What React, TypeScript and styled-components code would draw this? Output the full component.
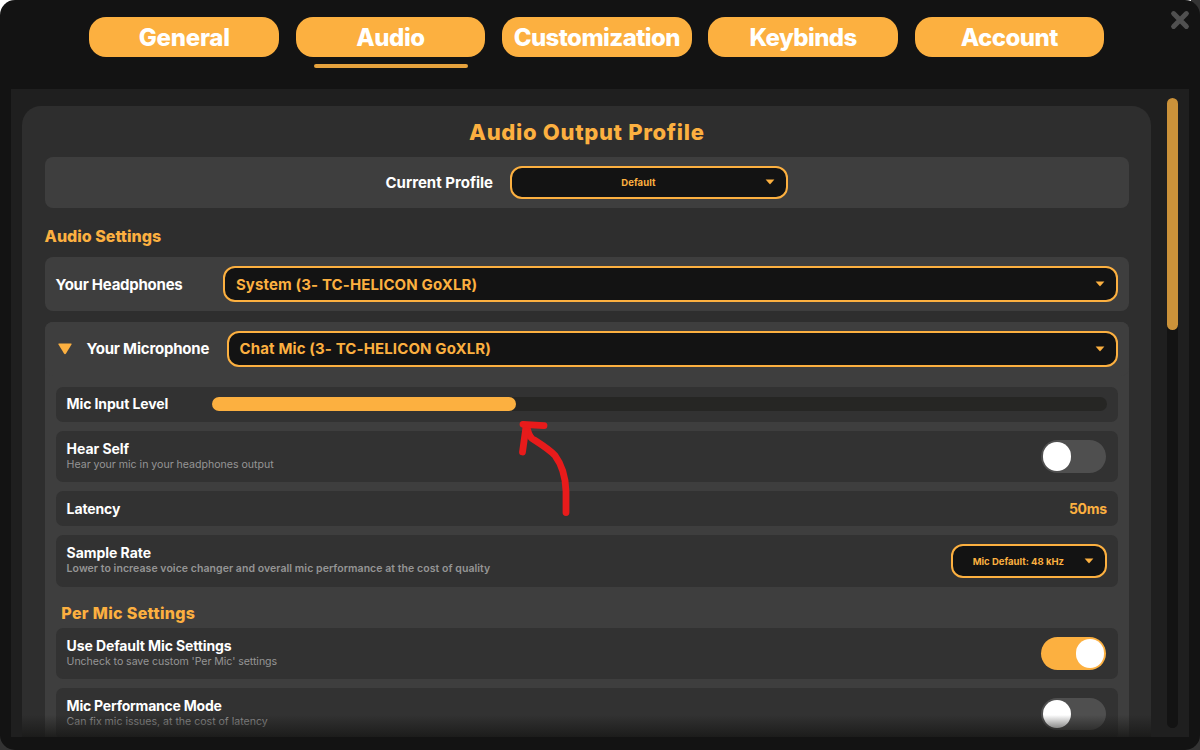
import React from 'react';
import styled, { createGlobalStyle } from 'styled-components';

const ORANGE = '#fcb040';

const GlobalStyle = createGlobalStyle`
  *, *::before, *::after { box-sizing: border-box; }
  body {
    margin: 0;
    background: linear-gradient(#fff, #fff) 0 0 / 20px 20px no-repeat,
      linear-gradient(#fff, #fff) 1183px 0 / 8px 2px no-repeat, #333;
    font-family: Inter, 'Liberation Sans', sans-serif;
    color: #fff;
  }
`;

const Window = styled.div`
  position: relative;
  width: 1200px;
  height: 750px;
  display: flex;
  flex-direction: column;
  padding: 17px 11px 13px;
  background: #131313;
  border-radius: 15px;
  overflow: hidden;
`;

const CloseButton = styled.button`
  position: absolute;
  top: 10px;
  right: 10px;
  width: 20px;
  height: 20px;
  padding: 0;
  border: 0;
  background: none;
  svg { display: block; }
`;

const Tabs = styled.nav`
  display: flex;
  align-items: flex-start;
  gap: 16.6px;
  height: 72px;
  padding-left: 78.4px;
`;

const TabItem = styled.div`
  display: flex;
  flex-direction: column;
  align-items: center;
  gap: 7px;
`;

const Tab = styled.button<{ $tracking: number }>`
  width: 189.7px;
  height: 40px;
  padding: 0;
  border: 0;
  border-radius: 17px;
  background: ${ORANGE};
  color: #fff;
  font: 800 24px/42px Inter, sans-serif;
  letter-spacing: ${p => p.$tracking}px;
  white-space: nowrap;
`;

const ActiveLine = styled.div`
  width: 154px;
  height: 4px;
  border-radius: 2px;
  background: #e6a23d;
`;

const Content = styled.main`
  position: relative;
  flex: none;
  width: 1178px;
  height: 648px;
  display: flex;
  align-items: flex-start;
  gap: 15.3px;
  padding: 17.3px 10.5px 0 11.3px;
  background: #1f1f1f;
  overflow: hidden;
`;

const Card = styled.section`
  flex: none;
  width: 1129px;
  height: 660px;
  padding: 0 22.3px;
  border-radius: 19px;
  background: #2e2e2e;
`;

const Fade = styled.div`
  position: absolute;
  left: 11.3px;
  bottom: 0;
  width: 1129px;
  height: 22px;
  background: linear-gradient(rgba(24, 24, 23, 0), rgba(24, 24, 23, 0.85));
`;

const ScrollTrack = styled.div`
  width: 11.5px;
  height: 630px;
  margin-top: -8.3px;
  border-radius: 6px;
  background: #131313;
`;

const ScrollThumb = styled.div`
  height: 232px;
  border-radius: 6px;
  background: #cb923a;
`;

const Title = styled.h1`
  height: 50.5px;
  margin: 0;
  color: ${ORANGE};
  text-align: center;
  font-size: 22px;
  font-weight: 800;
  line-height: 52px;
  letter-spacing: 0.69px;
`;

const Heading = styled.h2<{ $nested?: boolean }>`
  height: ${p => (p.$nested ? 41.5 : 49.7)}px;
  margin: 0;
  padding-left: ${p => (p.$nested ? 5.7 : 0)}px;
  padding-top: ${p => (p.$nested ? 3 : 5)}px;
  color: ${ORANGE};
  font-size: 16px;
  font-weight: 800;
  line-height: 47px;
  letter-spacing: ${p => (p.$nested ? 0.34 : 0)}px;
`;

const ProfileRow = styled.div`
  display: flex;
  align-items: center;
  justify-content: center;
  gap: 16.5px;
  height: 51px;
  border-radius: 8px;
  background: #3e3e3e;
`;

const DeviceRow = styled.div`
  display: flex;
  align-items: center;
  height: 53.5px;
  padding: 0 11.3px 0 11px;
  border-radius: 8px;
  background: #3e3e3e;
`;

const MicCard = styled.div`
  height: 440px;
  margin-top: 11.2px;
  border-radius: 8px;
  background: #3e3e3e;
`;

const MicBody = styled.div`
  padding: 11px 11.3px 0 11px;
`;

const Settings = styled.div`
  display: flex;
  flex-direction: column;
  gap: 9.2px;
`;

const Label = styled.span<{ $width?: number; $tracking?: number; $small?: boolean }>`
  flex: none;
  width: ${p => (p.$width ? `${p.$width}px` : 'auto')};
  padding-top: ${p => (p.$small ? 0 : 1)}px;
  font-size: ${p => (p.$small ? 14 : 15)}px;
  font-weight: 700;
  line-height: 18px;
  letter-spacing: ${p => p.$tracking ?? 0}px;
  white-space: nowrap;
`;

const Toggler = styled.span`
  flex: none;
  width: 31px;
  padding-left: 2px;
  svg { display: block; }
`;

const Select = styled.div<{ $compact?: boolean; $width?: number; $tracking?: number }>`
  display: flex;
  align-items: center;
  flex: ${p => (p.$width ? 'none' : '1')};
  width: ${p => (p.$width ? `${p.$width}px` : 'auto')};
  height: ${p => (p.$compact ? 33.5 : 36)}px;
  padding: 0 ${p => (p.$compact ? 10.8 : 11)}px 0 ${p => (p.$compact ? 0 : 11)}px;
  border: 2px solid ${ORANGE};
  border-radius: 12px;
  background: #131313;
  color: ${ORANGE};
  font-size: ${p => (p.$compact ? 9.5 : 15)}px;
  font-weight: 700;
  letter-spacing: ${p => p.$tracking ?? 0}px;
  white-space: nowrap;
  svg { flex: none; display: block; }
`;

const SelectText = styled.span<{ $center?: boolean }>`
  flex: 1;
  text-align: ${p => (p.$center ? 'center' : 'left')};
`;

const Setting = styled.div<{ $tall?: boolean }>`
  flex: none;
  display: flex;
  align-items: center;
  justify-content: space-between;
  height: ${p => (p.$tall ? 51.2 : 35)}px;
  padding: 0 11px;
  border-radius: 7px;
  background: #323232;
`;

const SettingText = styled.div`
  display: flex;
  flex-direction: column;
  padding-bottom: 2.4px;
`;

const Description = styled.span<{ $strong?: boolean; $tracking?: number }>`
  color: #959595;
  font-size: ${p => (p.$strong ? 10.5 : 10.6)}px;
  font-weight: ${p => (p.$strong ? 600 : 400)};
  line-height: 13px;
  letter-spacing: ${p => p.$tracking ?? 0}px;
  white-space: nowrap;
`;

const Value = styled.span`
  color: ${ORANGE};
  font-size: 14px;
  font-weight: 700;
  letter-spacing: -0.3px;
`;

const Meter = styled.div`
  flex: 1;
  height: 13.5px;
  border-radius: 7px;
  background: #262624;
`;

const MeterFill = styled.div`
  width: 304px;
  height: 100%;
  border-radius: 7px;
  background: ${ORANGE};
`;

const Switch = styled.div<{ $on?: boolean }>`
  display: flex;
  align-items: center;
  justify-content: ${p => (p.$on ? 'flex-end' : 'flex-start')};
  width: 65.3px;
  height: 32.5px;
  margin-right: 0.7px;
  padding: 0 2px;
  border-radius: 17px;
  background: ${p => (p.$on ? ORANGE : '#4f4f4f')};
`;

const Knob = styled.div`
  width: 28.5px;
  height: 28.5px;
  border-radius: 50%;
  background: #fff;
`;

const Annotation = styled.svg`
  position: absolute;
  left: 510px;
  top: 414px;
  pointer-events: none;
`;

const Caret = () => (
  <svg width="10" height="6" viewBox="0 0 10 6">
    <path d="M0.6 0.6H9.4L5.4 5Q5 5.4 4.6 5Z" fill={ORANGE} />
  </svg>
);

const tabs = [
  { name: 'General', tracking: -0.25 },
  { name: 'Audio', tracking: -0.45, active: true },
  { name: 'Customization', tracking: -0.58 },
  { name: 'Keybinds', tracking: -0.6 },
  { name: 'Account', tracking: -0.5 },
];

export default function App() {
  return (
    <>
      <GlobalStyle />
      <Window>
        <Tabs>
          {tabs.map(tab => (
            <TabItem key={tab.name}>
              <Tab $tracking={tab.tracking}>{tab.name}</Tab>
              {tab.active && <ActiveLine />}
            </TabItem>
          ))}
        </Tabs>
        <CloseButton aria-label="Close">
          <svg width="20" height="20" viewBox="0 0 20 20">
            <path d="M3.6 3.6L16.4 16.4M16.4 3.6L3.6 16.4" stroke="#505050" strokeWidth="5" strokeLinecap="round" />
          </svg>
        </CloseButton>

        <Content>
          <Card>
            <Title>Audio Output Profile</Title>
            <ProfileRow>
              <Label>Current Profile</Label>
              <Select $compact $width={278.5} $tracking={0.1}>
                <SelectText $center>Default</SelectText>
                <Caret />
              </Select>
            </ProfileRow>

            <Heading>Audio Settings</Heading>
            <DeviceRow>
              <Label $width={167.3} $tracking={-0.25}>Your Headphones</Label>
              <Select $tracking={0.12}>
                <SelectText>System (3- TC-HELICON GoXLR)</SelectText>
                <Caret />
              </Select>
            </DeviceRow>

            <MicCard>
              <DeviceRow>
                <Toggler>
                  <svg width="14" height="12" viewBox="0 0 14 12">
                    <path d="M1 0.4H13Q14.1 0.5 13.5 1.5L8 10.6Q7 11.9 6 10.6L0.5 1.5Q-0.1 0.5 1 0.4Z" fill={ORANGE} />
                  </svg>
                </Toggler>
                <Label $width={140} $tracking={-0.2}>Your Microphone</Label>
                <Select $tracking={0.12}>
                  <SelectText>Chat Mic (3- TC-HELICON GoXLR)</SelectText>
                  <Caret />
                </Select>
              </DeviceRow>

              <MicBody>
                <Settings>
                  <Setting>
                    <Label $small $width={145} $tracking={-0.12}>Mic Input Level</Label>
                    <Meter><MeterFill /></Meter>
                  </Setting>
                  <Setting $tall>
                    <SettingText>
                      <Label $small $tracking={-0.05}>Hear Self</Label>
                      <Description $tracking={-0.02}>Hear your mic in your headphones output</Description>
                    </SettingText>
                    <Switch><Knob /></Switch>
                  </Setting>
                  <Setting>
                    <Label $small $tracking={-0.12}>Latency</Label>
                    <Value>50ms</Value>
                  </Setting>
                  <Setting $tall>
                    <SettingText>
                      <Label $small $tracking={-0.05}>Sample Rate</Label>
                      <Description $strong $tracking={0.06}>
                        Lower to increase voice changer and overall mic performance at the cost of quality
                      </Description>
                    </SettingText>
                    <Select $compact $width={156}>
                      <SelectText $center>Mic Default: 48 kHz</SelectText>
                      <Caret />
                    </Select>
                  </Setting>
                </Settings>

                <Heading $nested>Per Mic Settings</Heading>
                <Settings>
                  <Setting $tall>
                    <SettingText>
                      <Label $small $tracking={-0.11}>Use Default Mic Settings</Label>
                      <Description $tracking={-0.06}>Uncheck to save custom 'Per Mic' settings</Description>
                    </SettingText>
                    <Switch $on><Knob /></Switch>
                  </Setting>
                  <Setting $tall>
                    <SettingText>
                      <Label $small $tracking={-0.23}>Mic Performance Mode</Label>
                      <Description $tracking={-0.02}>Can fix mic issues, at the cost of latency</Description>
                    </SettingText>
                    <Switch><Knob /></Switch>
                  </Setting>
                </Settings>
              </MicBody>
            </MicCard>
          </Card>
          <ScrollTrack><ScrollThumb /></ScrollTrack>
          <Fade />
        </Content>

        <Annotation
          width="70"
          height="110"
          viewBox="510 414 70 110"
          fill="none"
          stroke="#e81b1b"
          strokeWidth="6.8"
          strokeLinecap="round"
          strokeLinejoin="round"
        >
          <path d="M566 512.5V491C565.5 475 562 465 555 455.5C549 449 539 443 532 438.5C528 435 528 430 526.5 426" />
          <path d="M522.5 452L526 427" />
          <path d="M523 424.3L544 425.6" />
        </Annotation>
      </Window>
    </>
  );
}
